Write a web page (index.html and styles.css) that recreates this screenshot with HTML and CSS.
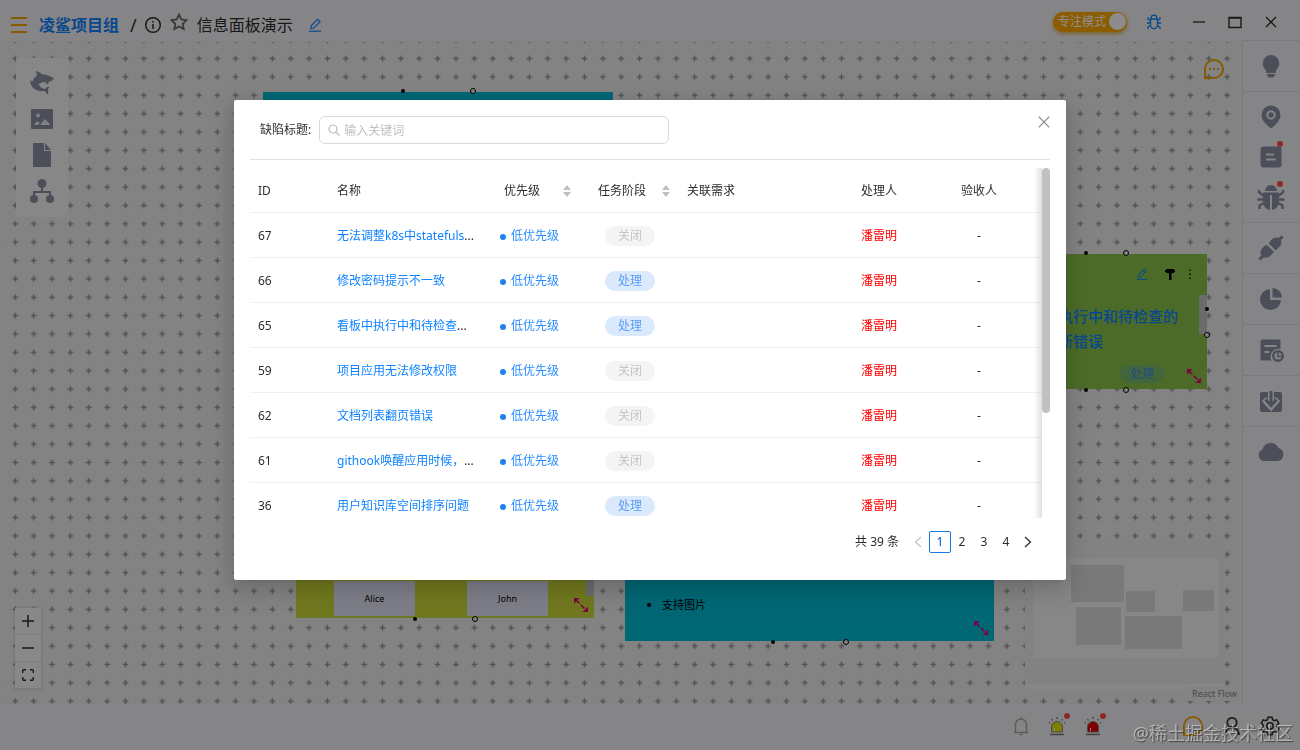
FILE: index.html
```
<!DOCTYPE html>
<html lang="zh-CN">
<head>
    <meta charset="UTF-8">
    <meta name="viewport" content="width=device-width, initial-scale=1.0">
    <title>信息面板演示</title>
    <link rel="stylesheet" href="styles.css">
</head>
<body>

<!-- Shared icons -->
<svg class="icon-defs" aria-hidden="true">
    <symbol id="icon-edit" viewBox="0 0 14 14">
        <path d="M1 13.2h12" fill="none" stroke="currentColor" stroke-width="1.2"/>
        <path d="M2.8 10.6l.6-3L9.6 1.4l2.4 2.4-6.2 6.2z" fill="none" stroke="currentColor" stroke-width="1.2"/>
    </symbol>
    <symbol id="icon-resize" viewBox="0 0 16 16">
        <path d="M3 3l10 10" fill="none" stroke="currentColor" stroke-width="1.6" stroke-dasharray="5 2"/>
        <path d="M1 1h5.500L1 6.500zM15 15H9.500L15 9.500z" fill="currentColor"/>
    </symbol>
    <symbol id="icon-sort" viewBox="0 0 10 14">
        <path d="M5 1l4 5H1zM5 13l4-5H1z" fill="currentColor"/>
    </symbol>
    <symbol id="icon-siren" viewBox="0 0 18 20">
        <path d="M3.500 16v-5a5.500 5.500 0 0 1 11 0v5z" fill="currentColor" stroke="#888" stroke-width="1"/>
        <path d="M6.500 15v-3" stroke="#fff" stroke-width="1"/>
        <path d="M2 18.500h14" stroke="#777" stroke-width="1.500"/>
        <path d="M9 1v2M3.500 3l1 1.500M14.500 3l-1 1.500M1 6.500l1 .6M17 6.500l-1 .6" stroke="#777" stroke-width="1.300"/>
    </symbol>
</svg>

<div class="app">
    <header class="header">
        <button class="icon-btn menu-btn" aria-label="菜单">
            <svg width="16" height="16" viewBox="0 0 16 16"><path d="M0 1h16M0 8h16M0 15h16" stroke="currentColor" stroke-width="2"/></svg>
        </button>
        <a class="project" href="#">凌鲨项目组</a>
        <span class="slash">/</span>
        <button class="icon-btn" aria-label="项目信息">
            <svg width="18" height="18" viewBox="0 0 18 18" fill="none" stroke="currentColor" stroke-width="1.500"><circle cx="9" cy="9" r="7.300"/><path d="M9 8v5M9 5v1.500"/></svg>
        </button>
        <button class="icon-btn star-btn" aria-label="收藏">
            <svg width="18" height="18" viewBox="0 0 18 18" fill="none" stroke="currentColor" stroke-width="1.800"><path d="M9 1.500l2.300 4.900 5.300.7-3.900 3.700 1 5.300L9 13.500l-4.700 2.600 1-5.300L1.400 7.100l5.300-.7z"/></svg>
        </button>
        <h1 class="title">信息面板演示</h1>
        <button class="icon-btn edit-btn" aria-label="编辑标题"><svg width="14" height="14"><use href="#icon-edit"/></svg></button>

        <div class="header-right">
            <button class="focus-switch" role="switch" aria-checked="true">专注模式<span class="knob"></span></button>
            <button class="icon-btn debug-btn" aria-label="调试">
                <svg width="16" height="16" viewBox="0 0 16 16" fill="none" stroke="currentColor" stroke-width="1.300"><path d="M4.500 5h7v6a3.500 3.700 0 0 1-7 0zM5.200 5V4a2.800 2.800 0 0 1 5.600 0v1M2 3v2.200l2.500 1.300M14 3v2.200l-2.500 1.300M1 9h3.500M11.500 9H15M2 15v-2.200l2.700-1.300M14 15v-2.200l-2.700-1.300"/></svg>
            </button>
            <button class="icon-btn" aria-label="最小化"><svg width="14" height="14" viewBox="0 0 14 14"><path d="M1 7h12" stroke="currentColor" stroke-width="1.300"/></svg></button>
            <button class="icon-btn" aria-label="最大化"><svg width="14" height="14" viewBox="0 0 14 14"><path d="M1 2.500h12v10H1zM1 3h12" fill="none" stroke="currentColor" stroke-width="1.400"/></svg></button>
            <button class="icon-btn" aria-label="关闭窗口"><svg width="14" height="14" viewBox="0 0 14 14"><path d="M2 2l10 10M12 2L2 12" stroke="currentColor" stroke-width="1.300"/></svg></button>
        </div>
    </header>

    <div class="main">
        <!-- Board canvas -->
        <main class="canvas">
            <svg class="grid" width="100%" height="100%" aria-hidden="true">
                <defs>
                    <pattern id="cross" x="6.150" y="7.400" width="18.360" height="18.360" patternUnits="userSpaceOnUse">
                        <path d="M6.400 9.180h5.600M9.180 6.400v5.600" stroke="#949494" stroke-width="1.400"/>
                    </pattern>
                </defs>
                <rect width="100%" height="100%" fill="url(#cross)"/>
            </svg>

            <div class="node node-intro">
                <i class="handle handle-dot"></i>
                <i class="handle handle-ring"></i>
            </div>

            <div class="node node-people">
                <div class="person">Alice</div>
                <div class="person">John</div>
                <i class="node-scroll"></i>
                <svg class="resize" width="16" height="16"><use href="#icon-resize"/></svg>
                <i class="handle handle-dot"></i>
                <i class="handle handle-ring"></i>
            </div>

            <div class="node node-text">
                <ul><li>支持图片</li></ul>
                <svg class="resize" width="16" height="16"><use href="#icon-resize"/></svg>
                <i class="handle handle-dot"></i>
                <i class="handle handle-ring"></i>
            </div>

            <div class="node node-bug">
                <div class="node-tools">
                    <button class="icon-btn node-edit" aria-label="编辑"><svg width="12" height="12"><use href="#icon-edit"/></svg></button>
                    <button class="icon-btn" aria-label="颜色"><svg width="12" height="12" viewBox="0 0 12 12"><path d="M2 1h8v4H2zM1 2h10v2H1zM5 4h2.500v8H5z" fill="currentColor"/></svg></button>
                    <button class="icon-btn" aria-label="更多"><svg width="4" height="12" viewBox="0 0 4 12"><path d="M1.300 1.500h1.400v1.400H1.300zM1.300 5.500h1.400v1.400H1.300zM1.300 9.500h1.400v1.400H1.300z" fill="currentColor"/></svg></button>
                </div>
                <a class="node-link" href="#">执行中和待检查的<br>断错误</a>
                <span class="node-tag">处理</span>
                <i class="node-scroll"></i>
                <svg class="resize" width="16" height="16"><use href="#icon-resize"/></svg>
                <i class="handle handle-dot"></i>
                <i class="handle handle-ring"></i>
                <i class="handle handle-dot at-bottom"></i>
                <i class="handle handle-ring at-bottom"></i>
                <i class="handle handle-dot at-right"></i>
                <i class="handle handle-ring at-right"></i>
            </div>

            <div class="toolbox">
                <button class="icon-btn" aria-label="凌鲨">
                    <svg width="26" height="26" viewBox="0 0 26 26" fill="currentColor"><path d="M6.500 1c3 .4 5 1.700 6.500 3.300 4.500.2 8.500 1.700 11.800 4.200-.6 1.600-2.200 2.600-4.600 3l-2.200 3.500-1.200-2.800c-3-.2-5.500.4-7.200 2 1.200 2.600 3.400 4.300 6.500 4.900 1-1.700 2.600-2.400 4.200-2.200-.8 1-1.300 2-1.300 3.200.6 1.600.6 3-.2 4.400-1.200-.8-2-1.900-2.700-3.500C8.500 22 1 18.500 1.200 10.200l2.200 1.200C4.200 9 5.800 7 8 5.600 7.800 4 7.300 2.500 6.500 1z"/></svg>
                </button>
                <button class="icon-btn" aria-label="图片">
                    <svg width="26" height="26" viewBox="0 0 26 26"><path d="M3 3h20a1 1 0 0 1 1 1v18a1 1 0 0 1-1 1H3a1 1 0 0 1-1-1V4a1 1 0 0 1 1-1z" fill="currentColor"/><circle cx="9" cy="9.500" r="2" fill="#ecedf0"/><path d="M5 19l3-4 3 2-2 2zM11 19l5-6 5.500 6z" fill="#ecedf0"/></svg>
                </button>
                <button class="icon-btn" aria-label="文档">
                    <svg width="26" height="26" viewBox="0 0 26 26" fill="currentColor"><path d="M5 1h10v8h7v15a1 1 0 0 1-1 1H5a1 1 0 0 1-1-1V2a1 1 0 0 1 1-1zM16 1l6 7h-6z"/></svg>
                </button>
                <button class="icon-btn" aria-label="流程">
                    <svg width="26" height="26" viewBox="0 0 26 26" fill="currentColor"><circle cx="13" cy="5.500" r="4.500"/><circle cx="5" cy="21" r="4"/><circle cx="21" cy="21" r="4"/><path d="M12 9h2v4h8v5h-2v-3H6v3H4v-5h8z"/></svg>
                </button>
            </div>

            <button class="icon-btn chat-btn" aria-label="沟通">
                <svg width="22" height="22" viewBox="0 0 22 22" fill="none" stroke="currentColor" stroke-width="2"><path d="M2 20v-9a9 9 0 1 1 9 9z"/><path d="M6 11h2M10 11h2M14 11h2"/></svg>
            </button>

            <div class="zoom-controls">
                <button aria-label="放大"><svg width="12" height="12" viewBox="0 0 12 12"><path d="M0 6h12M6 0v12" stroke="currentColor" stroke-width="1.500"/></svg></button>
                <button aria-label="缩小"><svg width="12" height="12" viewBox="0 0 12 12"><path d="M0 6h12" stroke="currentColor" stroke-width="1.500"/></svg></button>
                <button aria-label="适应"><svg width="12" height="12" viewBox="0 0 12 12"><path d="M.7 4V2A1.300 1.300 0 0 1 2 .7h2M8 .7h2A1.300 1.300 0 0 1 11.300 2v2M11.300 8v2a1.300 1.300 0 0 1-1.300 1.300H8M4 11.300H2A1.300 1.300 0 0 1 .7 10V8" fill="none" stroke="currentColor" stroke-width="1.400"/></svg></button>
            </div>

            <svg class="minimap" width="200" height="150" viewBox="0 0 200 150" aria-hidden="true">
                <rect width="200" height="150" fill="#f6f6f6"/>
                <path d="M0 0h200v145H0zM8 19v100h186V19z" fill="#ededed" fill-rule="evenodd"/>
                <path d="M46 26h53v37H46zM101 52h29v21h-29zM158 51h31v21h-31zM51 68h45v38H51zM100 77h57v33h-57z" fill="#dcdcdc"/>
            </svg>
            <a class="attribution" href="#">React Flow</a>
        </main>

        <!-- Right toolbar -->
        <nav class="sidebar">
            <div class="side-group">
                <a href="#" aria-label="想法"><svg width="26" height="26" viewBox="0 0 26 26" fill="currentColor"><path d="M13 2a8.300 8.300 0 0 1 8.300 8.300c0 3.500-2 5.300-3.300 7.200V20H8v-2.500c-1.300-1.900-3.300-3.700-3.300-7.200A8.300 8.300 0 0 1 13 2zM9 21h8v1.500l-2 2h-4l-2-2z"/></svg></a>
            </div>
            <div class="side-group">
                <a href="#" aria-label="目标"><svg width="26" height="26" viewBox="0 0 26 26" fill="currentColor"><path d="M13 1.500a9.500 9.500 0 0 1 9.500 9.500c0 5-4.500 9.500-9.500 13.500C8 20.500 3.500 16 3.500 11A9.500 9.500 0 0 1 13 1.500z"/><circle cx="13" cy="11" r="3.700" fill="none" stroke="#f3f3f6" stroke-width="2"/></svg></a>
                <a href="#" aria-label="任务"><svg width="26" height="26" viewBox="0 0 26 26"><rect x="2.500" y="2.500" width="21" height="21" rx="3" fill="currentColor"/><path d="M8 10.500h8M8 15.500h10" stroke="#f3f3f6" stroke-width="2"/></svg><i class="badge"></i></a>
                <a href="#" aria-label="缺陷"><svg width="28" height="28" viewBox="0 0 28 28"><path d="M8 8a6 6 0 0 1 12 0zM6 9.500h16v9.500a8 8 0 0 1-16 0z" fill="currentColor"/><path d="M7 13L2 9.500V7M21 13l5-3.500V7M7 16.500H.5M21 16.500h6.500M7 20l-4.500 2.500V26M21 20l4.500 2.500V26" fill="none" stroke="currentColor" stroke-width="2.400"/><path d="M14 12v15" stroke="#f3f3f6" stroke-width="2"/></svg><i class="badge"></i></a>
            </div>
            <div class="side-group">
                <a href="#" aria-label="接口"><svg width="26" height="26" viewBox="0 0 26 26"><path d="M12 6.500c2.500-4 7-5 10-3 2.500 3 1.700 7-2 9.500L17.500 15.500l-7-7zM9.500 10.500l6.500 6.500-2.500 2.500c-2.500 3.500-7 4-9.500 2-2.200-2.500-2-6 .5-8.500l2.500-2.500c.8-.5 1.700-.5 2.500 0z" fill="currentColor"/><path d="M21 5l3.500-3.500M5 21l-3.500 3.500" stroke="currentColor" stroke-width="3"/><path d="M9.500 8.500l8 8" stroke="#f3f3f6" stroke-width="1.500"/></svg></a>
            </div>
            <div class="side-group">
                <a href="#" aria-label="统计"><svg width="26" height="26" viewBox="0 0 26 26" fill="currentColor"><path d="M12 3v11h11a10.500 10.500 0 1 1-11-11zM14.500 2a9.500 9.500 0 0 1 9.500 9.500h-9.500z"/></svg></a>
            </div>
            <div class="side-group">
                <a href="#" aria-label="记录"><svg width="26" height="26" viewBox="0 0 26 26"><path d="M4 2.500h17a1.500 1.500 0 0 1 1.500 1.500v8a8 8 0 0 0-9 11.500H4A1.500 1.500 0 0 1 2.500 22V4A1.500 1.500 0 0 1 4 2.500z" fill="currentColor"/><path d="M6.500 9h12M6.500 15h5" stroke="#f3f3f6" stroke-width="1.800"/><circle cx="20" cy="19" r="4.800" fill="none" stroke="currentColor" stroke-width="2.400"/><path d="M20 15.500v4h3.500" fill="none" stroke="currentColor" stroke-width="1.600"/></svg></a>
            </div>
            <div class="side-group">
                <a href="#" aria-label="下载"><svg width="26" height="26" viewBox="0 0 26 26"><path d="M2 6a2 2 0 0 1 2-2h18a2 2 0 0 1 2 2v16a2 2 0 0 1-2 2H4a2 2 0 0 1-2-2z" fill="currentColor"/><path d="M13 1v15M6 11l7 8 7-8" fill="none" stroke="#f3f3f6" stroke-width="6"/><path d="M13 3v14M7.500 11.500l5.500 6 5.500-6" fill="none" stroke="currentColor" stroke-width="3"/></svg></a>
            </div>
            <div class="side-group">
                <a href="#" aria-label="云端"><svg width="28" height="26" viewBox="0 0 28 26" fill="currentColor"><path d="M7 22a6 6 0 0 1-1.500-11.500A8.500 8.500 0 0 1 21.500 9 6.700 6.700 0 0 1 21 22z"/></svg></a>
            </div>
        </nav>
    </div>

    <footer class="footer">
        <button class="icon-btn" aria-label="通知"><svg width="18" height="20" viewBox="0 0 18 20" fill="none" stroke="#aaa" stroke-width="1.500"><path d="M3.500 16V8.500a5.500 5.500 0 0 1 11 0V16M2 16.500h14M7.500 18.500h3M9 1v2"/></svg></button>
        <button class="icon-btn siren siren-yellow" aria-label="警告"><svg width="18" height="20"><use href="#icon-siren"/></svg><i class="badge"></i></button>
        <button class="icon-btn siren siren-red" aria-label="错误"><svg width="18" height="20"><use href="#icon-siren"/></svg><i class="badge"></i></button>
        <button class="icon-btn message-btn" aria-label="消息"><svg width="22" height="22" viewBox="0 0 22 22" fill="none" stroke="currentColor" stroke-width="2"><path d="M2 20v-9a9 9 0 1 1 9 9z"/></svg></button>
        <button class="icon-btn" aria-label="用户"><svg width="20" height="20" viewBox="0 0 20 20" fill="none" stroke="currentColor" stroke-width="1.700"><circle cx="10" cy="6.500" r="4.700"/><path d="M3 19c0-4.500 3-7.500 7-7.500s7 3 7 7.500"/></svg></button>
        <button class="icon-btn" aria-label="设置"><svg width="20" height="20" viewBox="0 0 20 20" fill="none" stroke="currentColor" stroke-width="1.500"><path d="M8 1.200h4l.6 2.500 1.700 1 2.500-.8 2 3.400-1.900 1.800v1.800l1.900 1.800-2 3.400-2.500-.8-1.700 1-.6 2.500H8l-.6-2.500-1.700-1-2.500.8-2-3.400 1.900-1.800V9.100L1.200 7.300l2-3.400 2.500.8 1.700-1z"/><circle cx="10" cy="10" r="3.200"/></svg></button>
    </footer>
</div>

<!-- Defect picker dialog -->
<div class="mask">
    <section class="modal" role="dialog" aria-modal="true" aria-label="选择缺陷">
        <button class="icon-btn modal-close" aria-label="关闭"><svg width="12" height="12" viewBox="0 0 12 12"><path d="M.7.7l10.600 10.600M11.300.7L.7 11.300" stroke="currentColor" stroke-width="1.200"/></svg></button>

        <form class="search">
            <label for="keyword">缺陷标题:</label>
            <div class="search-box">
                <svg width="12" height="12" viewBox="0 0 12 12" fill="none" stroke="currentColor" stroke-width="1.200"><circle cx="5" cy="5" r="4"/><path d="M8 8l3.500 3.500"/></svg>
                <input type="text" id="keyword" placeholder="输入关键词">
            </div>
        </form>

        <div class="table-area">
            <div class="table-wrap">
                <div class="table-scroll">
                    <table>
                        <colgroup>
                            <col class="col-id"><col class="col-name"><col class="col-priority"><col class="col-stage"><col class="col-req"><col class="col-user"><col class="col-user">
                        </colgroup>
                        <thead>
                            <tr>
                                <th>ID</th>
                                <th>名称</th>
                                <th><button class="sort-btn sort-priority">优先级<svg width="10" height="14"><use href="#icon-sort"/></svg></button></th>
                                <th><button class="sort-btn">任务阶段<svg width="10" height="14"><use href="#icon-sort"/></svg></button></th>
                                <th>关联需求</th>
                                <th>处理人</th>
                                <th>验收人</th>
                            </tr>
                        </thead>
                        <tbody>
                            <tr>
                                <td>67</td>
                                <td><a href="#">无法调整k8s中statefuls</a>...</td>
                                <td><span class="priority">低优先级</span></td>
                                <td><span class="tag tag-closed">关闭</span></td>
                                <td></td>
                                <td class="owner">潘雷明</td>
                                <td class="checker">-</td>
                            </tr>
                            <tr>
                                <td>66</td>
                                <td><a href="#">修改密码提示不一致</a></td>
                                <td><span class="priority">低优先级</span></td>
                                <td><span class="tag tag-open">处理</span></td>
                                <td></td>
                                <td class="owner">潘雷明</td>
                                <td class="checker">-</td>
                            </tr>
                            <tr>
                                <td>65</td>
                                <td><a href="#">看板中执行中和待检查</a>...</td>
                                <td><span class="priority">低优先级</span></td>
                                <td><span class="tag tag-open">处理</span></td>
                                <td></td>
                                <td class="owner">潘雷明</td>
                                <td class="checker">-</td>
                            </tr>
                            <tr>
                                <td>59</td>
                                <td><a href="#">项目应用无法修改权限</a></td>
                                <td><span class="priority">低优先级</span></td>
                                <td><span class="tag tag-closed">关闭</span></td>
                                <td></td>
                                <td class="owner">潘雷明</td>
                                <td class="checker">-</td>
                            </tr>
                            <tr>
                                <td>62</td>
                                <td><a href="#">文档列表翻页错误</a></td>
                                <td><span class="priority">低优先级</span></td>
                                <td><span class="tag tag-closed">关闭</span></td>
                                <td></td>
                                <td class="owner">潘雷明</td>
                                <td class="checker">-</td>
                            </tr>
                            <tr>
                                <td>61</td>
                                <td><a href="#">githook唤醒应用时候，</a>...</td>
                                <td><span class="priority">低优先级</span></td>
                                <td><span class="tag tag-closed">关闭</span></td>
                                <td></td>
                                <td class="owner">潘雷明</td>
                                <td class="checker">-</td>
                            </tr>
                            <tr>
                                <td>36</td>
                                <td><a href="#">用户知识库空间排序问题</a></td>
                                <td><span class="priority">低优先级</span></td>
                                <td><span class="tag tag-open">处理</span></td>
                                <td></td>
                                <td class="owner">潘雷明</td>
                                <td class="checker">-</td>
                            </tr>
                        </tbody>
                    </table>
                </div>
            </div>
            <div class="scrollbar"><div class="thumb"></div></div>
        </div>

        <nav class="pagination" aria-label="分页">
            <span class="total">共 39 条</span>
            <button class="page-prev" disabled aria-label="上一页"><svg width="8" height="12" viewBox="0 0 8 12"><path d="M7 1L1.500 6 7 11" fill="none" stroke="currentColor" stroke-width="1.200"/></svg></button>
            <button class="active">1</button>
            <button>2</button>
            <button>3</button>
            <button>4</button>
            <button aria-label="下一页"><svg width="8" height="12" viewBox="0 0 8 12"><path d="M1 1l5.500 5L1 11" fill="none" stroke="currentColor" stroke-width="1.300"/></svg></button>
        </nav>
    </section>
</div>

<div class="watermark">@稀土掘金技术社区</div>

</body>
</html>
```
FILE: styles.css
```
* {
    box-sizing: border-box;
}

body {
    margin: 0;
    font-family: "Noto Sans", "Noto Sans CJK SC", sans-serif;
    font-size: 12px;
    line-height: 20px;
    color: #2c2d2e;
    overflow: hidden;
}

a {
    color: #0e83ff;
    text-decoration: none;
}

button {
    font: inherit;
    color: inherit;
    padding: 0;
    border: none;
    background: none;
    cursor: pointer;
}

svg {
    display: block;
    flex: none;
}

.icon-defs {
    position: absolute;
    width: 0;
    height: 0;
}

.icon-btn {
    display: flex;
    align-items: center;
    justify-content: center;
    flex: none;
}

.app {
    display: flex;
    flex-direction: column;
    height: 100vh;
    background-color: #f3f3f6;
}

/* Header */
.header {
    display: flex;
    align-items: center;
    height: 41px;
    padding: 8px 22px 0 11px;
    flex: none;
}

.menu-btn {
    color: #f5a700;
    margin-right: 12px;
}

.project {
    font-size: 16px;
    font-weight: 700;
}

.slash {
    font-size: 18px;
    margin: 0 7px 0 11px;
}

.star-btn {
    color: #666;
    margin: 0 9px 6px 8px;
}

.title {
    margin: 0;
    font-size: 16px;
    font-weight: 400;
}

.edit-btn {
    color: #0e83ff;
    margin-left: 15px;
}

.header-right {
    display: flex;
    align-items: center;
    gap: 22px;
    margin-left: auto;
    margin-bottom: 6px;
}

.focus-switch {
    display: flex;
    align-items: center;
    justify-content: space-between;
    width: 74px;
    height: 20px;
    padding: 0 1px 0 5px;
    border-radius: 10px;
    background-color: #ffa800;
    color: #fff;
    box-shadow: 0 2px 4px #e0b050;
}

.knob {
    width: 17px;
    height: 17px;
    border-radius: 50%;
    background-color: #fff;
}

.debug-btn {
    color: #0e83ff;
    margin: 0 8px 0 -3px;
}

.main {
    display: flex;
    flex: 1;
    min-height: 0;
}

/* Canvas */
.canvas {
    position: relative;
    flex: 1;
    overflow: hidden;
    background-color: #eee;
    border-top: 1px solid #e9e9e9;
}

.grid {
    position: absolute;
    top: 0;
    left: 0;
}

.node {
    position: absolute;
}

.node-intro {
    left: 263px;
    top: 50px;
    width: 350px;
    height: 220px;
    background-color: #00bcd4;
}

.node-people {
    display: flex;
    align-items: flex-end;
    gap: 52px;
    left: 296px;
    top: 400px;
    width: 298px;
    height: 176px;
    padding: 0 38px 2px;
    background-color: #cddc39;
}

.person {
    width: 81px;
    height: 35px;
    background-color: #e6e6fa;
    font-size: 9px;
    line-height: 35px;
    text-align: center;
    color: #000;
}

.node-text {
    left: 625px;
    top: 400px;
    width: 369px;
    height: 199px;
    padding: 153px 37px 0;
    background-color: #00bcd4;
    font-size: 11px;
    color: #000;
}

.node-text ul {
    margin: 0;
    padding: 0;
}

.node-bug {
    left: 1045px;
    top: 212px;
    width: 162px;
    height: 135px;
    padding: 14px 15px 14px 13px;
    background-color: #8bc34a;
}

.node-tools {
    display: flex;
    justify-content: flex-end;
    gap: 12px;
    margin-bottom: 24px;
    color: #000;
}

.node-edit {
    color: #0e83ff;
    margin-right: 4px;
}

.node-link {
    font-size: 15px;
    font-weight: 500;
    line-height: 25px;
    white-space: nowrap;
}

.node-tag {
    position: absolute;
    right: 43px;
    bottom: 6px;
    width: 44px;
    border-radius: 10px;
    background-color: rgba(100, 170, 160, 0.4);
    line-height: 18px;
    text-align: center;
    color: #3f8fe8;
}

.node-scroll {
    position: absolute;
    right: 0;
    top: 41px;
    width: 8px;
    height: 39px;
    background-color: #c4c4c4;
}

.node-people .node-scroll {
    top: 115px;
}

.resize {
    position: absolute;
    right: 5px;
    bottom: 5px;
    color: #e6007a;
}

.handle {
    position: absolute;
    left: 50%;
    width: 6px;
    height: 6px;
    border-radius: 50%;
    top: -4px;
    transform: translateX(-50%);
}

.handle-dot {
    left: 40%;
    width: 4px;
    height: 4px;
    top: -3px;
    background-color: #000;
}

.handle-ring {
    left: 60%;
    border: 1px solid #000;
    background-color: #eee;
}

.node-bug .handle-dot {
    left: 25%;
}

.node-bug .handle-ring,
.node-bug .handle-ring.at-bottom {
    left: 50%;
}

.node-people .handle,
.node-text .handle,
.handle.at-bottom {
    top: auto;
    bottom: -4px;
}

.node-people .handle-dot,
.node-text .handle-dot,
.handle-dot.at-bottom {
    bottom: -3px;
}

.node-bug .at-right {
    left: 100%;
    top: 39%;
}

.node-bug .handle-ring.at-right {
    left: 100%;
    top: 58%;
}

.toolbox {
    position: absolute;
    left: 16px;
    top: 16px;
    display: flex;
    flex-direction: column;
    align-items: center;
    gap: 10px;
    width: 52px;
    padding: 12px 0 13px;
    background-color: #f6f6f8;
    color: #8a90a2;
}

.chat-btn {
    position: absolute;
    right: 17px;
    top: 16px;
    color: #f5a700;
}

.zoom-controls {
    position: absolute;
    left: 15px;
    bottom: 15px;
    display: flex;
    flex-direction: column;
    background-color: #f8f8f8;
    box-shadow: 0 0 2px 1px rgba(0, 0, 0, 0.08);
}

.zoom-controls button {
    display: flex;
    align-items: center;
    justify-content: center;
    width: 26px;
    height: 27px;
    border-bottom: 1px solid #e4e4e4;
}

.minimap {
    position: absolute;
    right: 17px;
    bottom: 15px;
}

.attribution {
    position: absolute;
    right: 0;
    bottom: 3px;
    padding: 0 5px;
    background-color: #efefef;
    font-size: 9px;
    line-height: 15px;
    color: #888;
}

/* Right toolbar */
.sidebar {
    width: 58px;
    flex: none;
    margin-top: -1px;
    padding-right: 1px;
    border-left: 1px solid #dcdcde;
    color: #8a90a2;
}

.side-group {
    padding: 5px 0;
    border-top: 1px solid #dedee2;
}

.side-group a {
    position: relative;
    display: flex;
    align-items: center;
    justify-content: center;
    height: 40px;
    color: inherit;
}

.badge {
    position: absolute;
    top: 4px;
    right: 16px;
    width: 6px;
    height: 6px;
    border-radius: 50%;
    background-color: #ff4d4f;
}

/* Footer */
.footer {
    display: flex;
    align-items: center;
    justify-content: flex-end;
    gap: 18px;
    height: 46px;
    padding: 0 20px 3px;
    flex: none;
}

.siren {
    position: relative;
}

.siren .badge {
    top: -3px;
    right: -4px;
}

.siren-yellow {
    color: #e6e600;
}

.siren-red {
    color: #e60000;
}

.message-btn {
    margin-left: 62px;
    color: #f5a700;
}

/* Dialog */
.mask {
    position: fixed;
    inset: 0;
    display: flex;
    align-items: flex-start;
    justify-content: center;
    padding-top: 100px;
    background-color: rgba(0, 0, 0, 0.45);
}

.modal {
    position: relative;
    width: 64%;
    padding: 16px 16px 27px;
    border-radius: 2px;
    background-color: #fff;
    box-shadow: 0 3px 6px -4px rgba(0, 0, 0, 0.12), 0 6px 16px rgba(0, 0, 0, 0.1), 0 9px 28px 8px rgba(0, 0, 0, 0.1);
}

.modal-close {
    position: absolute;
    top: 16px;
    right: 16px;
    color: #888;
}

.search {
    display: flex;
    align-items: center;
    gap: 8px;
    padding: 0 0 15px 10px;
    border-bottom: 1px solid #e0e0e0;
}

.search-box {
    display: flex;
    align-items: center;
    gap: 4px;
    width: 350px;
    height: 28px;
    padding: 0 8px;
    border: 1px solid #d9d9d9;
    border-radius: 6px;
    color: #bbb;
}

.search-box input {
    flex: 1;
    min-width: 0;
    padding: 1px 0 0;
    border: none;
    outline: none;
    background: none;
    font: inherit;
    color: #2c2d2e;
}

.search-box input::placeholder {
    color: #bfbfbf;
}

.table-area {
    display: flex;
    margin-top: 8px;
}

.table-wrap {
    position: relative;
    flex: 1;
    min-width: 0;
}

.table-wrap::after {
    content: "";
    position: absolute;
    top: 0;
    right: 0;
    bottom: 0;
    width: 8px;
    background: linear-gradient(to right, rgba(0, 0, 0, 0), rgba(0, 0, 0, 0.12));
}

.table-scroll {
    max-height: 350px;
    overflow: auto;
    scrollbar-width: none;
}

table {
    width: 100%;
    min-width: 803px;
    table-layout: fixed;
    border-collapse: separate;
    border-spacing: 0;
}

.col-id { width: 79px; }
.col-priority { width: 98px; }
.col-stage { width: 89px; }
.col-req { width: 174px; }
.col-user { width: 100px; }

th, td {
    height: 45px;
    padding: 2px 8px 0;
    border-bottom: 1px solid #f0f0f0;
    font-weight: 400;
    text-align: left;
    white-space: nowrap;
}

.sort-btn {
    display: flex;
    align-items: center;
    justify-content: space-between;
    width: 100%;
}

.sort-btn svg {
    color: #bfbfbf;
}

.sort-priority {
    padding: 0 10px 0 4px;
}

.priority {
    display: flex;
    align-items: center;
    gap: 5px;
    color: #2a8cff;
}

.priority::before {
    content: "";
    width: 6px;
    height: 6px;
    margin-top: 2px;
    border-radius: 50%;
    background-color: #1f80f0;
}

.tag {
    display: block;
    width: 50px;
    margin-left: 7px;
    border-radius: 10px;
    text-align: center;
}

.tag-closed {
    background-color: #f4f4f4;
    color: #c4c4c4;
}

.tag-open {
    background-color: #dbe9fd;
    color: #5a9df5;
}

.owner {
    color: #f00;
}

.checker {
    padding-left: 24px;
}

.scrollbar {
    width: 8px;
    flex: none;
}

.thumb {
    height: 70%;
    border-radius: 4px;
    background-color: #c1c1c1;
}

.pagination {
    display: flex;
    align-items: center;
    justify-content: flex-end;
    margin-top: 13px;
    padding-right: 11px;
}

.total {
    margin-right: 8px;
}

.pagination button {
    display: flex;
    align-items: center;
    justify-content: center;
    width: 22px;
    height: 22px;
}

.pagination .page-prev {
    color: #bfbfbf;
}

.pagination .active {
    border: 1px solid #1677e0;
    border-radius: 2px;
    color: #1677e0;
    font-weight: 500;
}

.watermark {
    position: fixed;
    right: 7px;
    bottom: 4px;
    font-size: 18px;
    line-height: 26px;
    color: rgba(255, 255, 255, 0.45);
    text-shadow: 1px 1px 1px rgba(0, 0, 0, 0.5);
}
```
